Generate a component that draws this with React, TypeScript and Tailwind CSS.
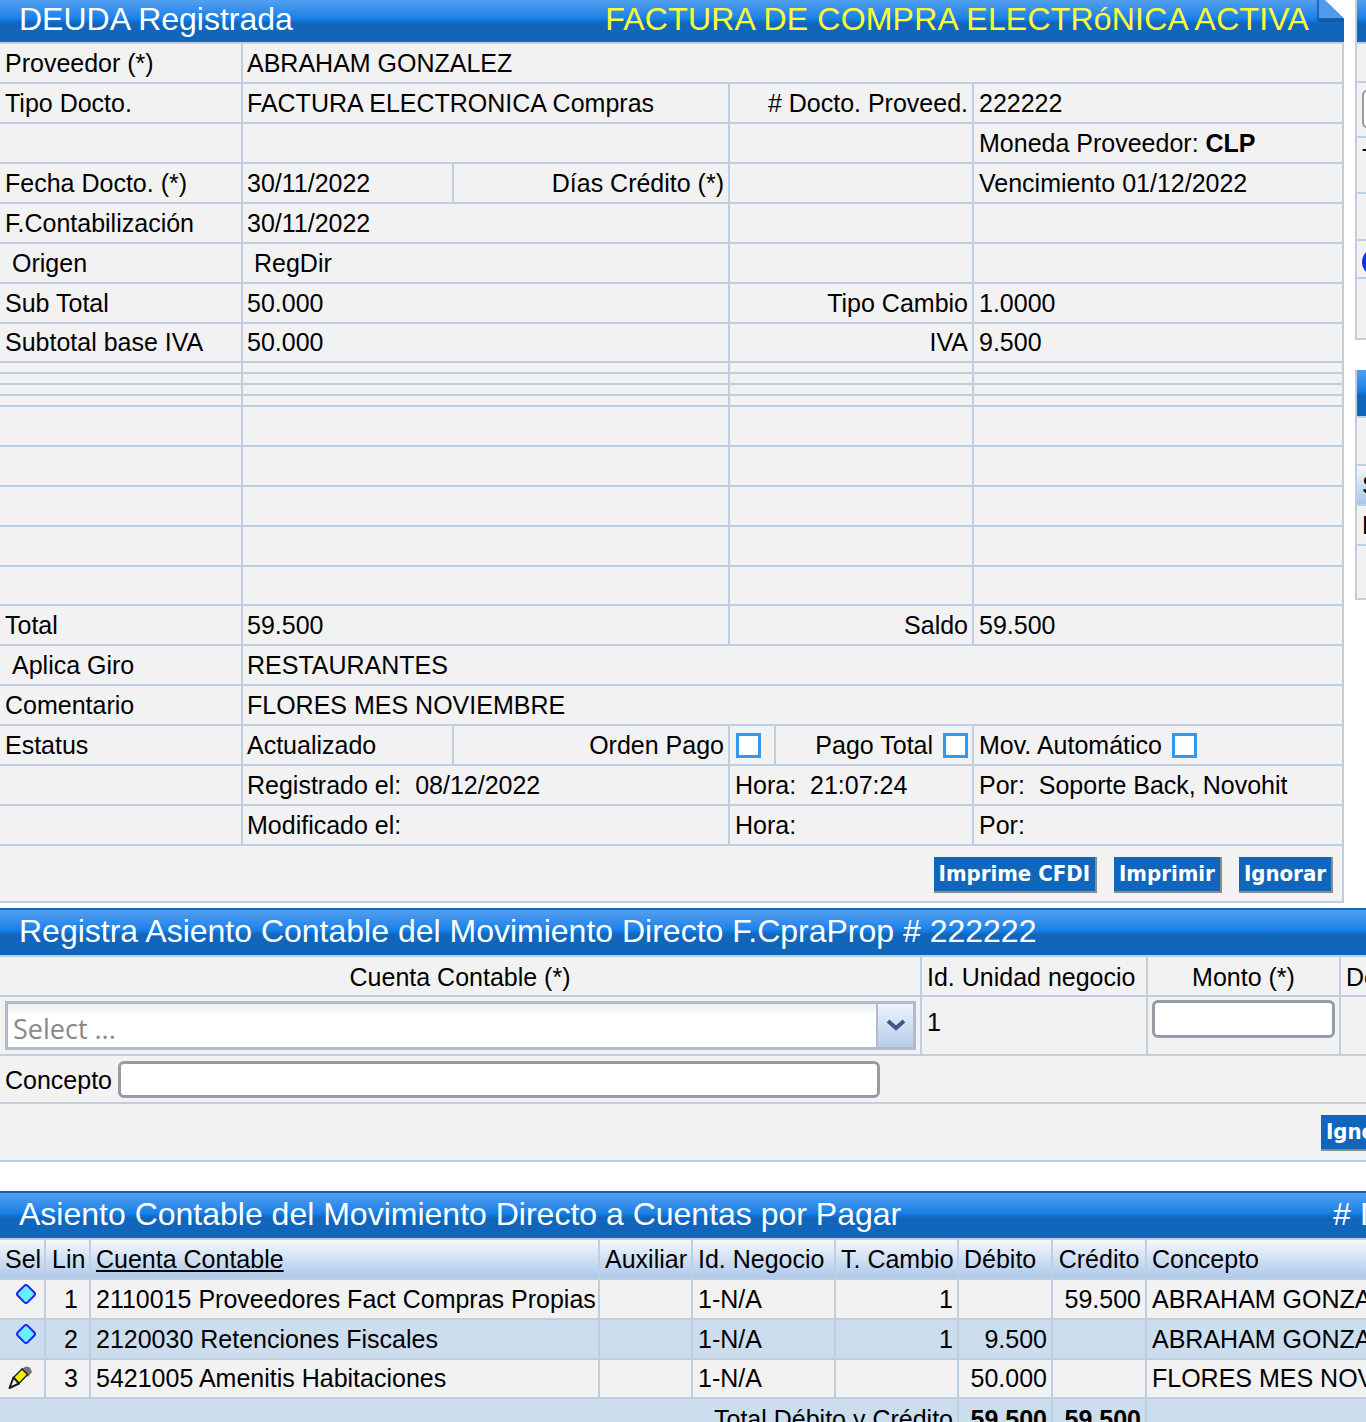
import React from 'react';

const line = 'border-[#c0cfe0]';
const td = `border-b-2 ${line} align-middle whitespace-nowrap overflow-hidden`;
const tl = `${td} border-l-2`;

function Bar({ children, className = '' }: { children: React.ReactNode; className?: string }) {
  return (
    <div className={`h-[44px] border-b-2 ${line} pb-[4px] bg-gradient-to-b from-[#529ff0] via-[#1580e8] via-45% to-[#1166bc] to-55% flex items-center text-[32px] text-white ${className}`}>
      {children}
    </div>
  );
}

function Check({ className = '' }: { className?: string }) {
  return <span className={`inline-block w-[25px] h-[25px] -mt-[4px] bg-white border-[3px] border-[#2f9bf0] align-middle ${className}`} />;
}

function Btn({ children }: { children: React.ReactNode }) {
  return (
    <button className="h-[36px] px-[5px] bg-[#1166bc] border-r-2 border-b-2 border-[#8c8c8c] text-white font-bold text-[22px] font-['DejaVu_Sans_Condensed','DejaVu_Sans',sans-serif] [font-stretch:condensed] whitespace-nowrap">
      {children}
    </button>
  );
}

function Diamond() {
  return (
    <svg width="20" height="20" viewBox="0 0 20 20" className="block ml-[16px] -mt-[11px]">
      <rect x="3" y="3" width="14" height="14" rx="2.5" transform="rotate(45 10 10)" fill="#66f0ff" stroke="#2222ee" strokeWidth="2" />
    </svg>
  );
}

function Pencil() {
  return (
    <svg width="24" height="24" viewBox="0 0 24 24" className="block ml-[8px]">
      <path d="M13 3 L18 0.5 L22 1.5 L24 6 L20 11 Z" fill="#757575" />
      <path d="M5.5 11.5 L14 3 L19.5 8.5 L11 17.5 Z" fill="#f8ee00" stroke="#1c1c1c" strokeWidth="1.4" />
      <path d="M5.5 11.5 L1.5 22 L11 17.5 Z" fill="#f6f6f6" stroke="#1c1c1c" strokeWidth="2" strokeLinejoin="round" />
    </svg>
  );
}

type Row = {
  a?: React.ReactNode; b?: React.ReactNode; c?: React.ReactNode; d?: React.ReactNode;
  h?: string;
};

const topRows: Row[] = [
  { a: 'Tipo Docto.', b: 'FACTURA ELECTRONICA Compras', c: '# Docto. Proveed.', d: '222222' },
  { d: <>Moneda Proveedor: <b>CLP</b></> },
];

const midRows: Row[] = [
  { a: 'F.Contabilización', b: '30/11/2022' },
  { a: <span className="pl-[7px]">Origen</span>, b: <span className="pl-[7px]">RegDir</span> },
  { a: 'Sub Total', b: '50.000', c: 'Tipo Cambio', d: '1.0000' },
  { a: 'Subtotal base IVA', b: '50.000', c: 'IVA', d: '9.500', h: 'h-[39px] [&>td]:pb-[2px]' },
  { h: 'h-[11px]' }, { h: 'h-[11px]' }, { h: 'h-[11px]' }, { h: 'h-[11px]' },
  {}, {}, {}, {},
  { h: 'h-[39px]' },
  { a: 'Total', b: '59.500', c: 'Saldo', d: '59.500' },
];

function Std({ a, b, c, d, h = 'h-[40px]' }: Row) {
  return (
    <tr className={h}>
      <td className={`${td} pl-[5px]`}>{a}</td>
      <td colSpan={2} className={`${tl} pl-[4px]`}>{b}</td>
      <td colSpan={2} className={`${tl} pr-[4px] text-right`}>{c}</td>
      <td className={`${tl} border-r-2 pl-[5px]`}>{d}</td>
    </tr>
  );
}

function Wide({ a, b }: { a: React.ReactNode; b: React.ReactNode }) {
  return (
    <tr className="h-[40px]">
      <td className={`${td} pl-[5px]`}>{a}</td>
      <td colSpan={5} className={`${tl} border-r-2 pl-[4px]`}>{b}</td>
    </tr>
  );
}

function DeudaPanel() {
  return (
    <div className="w-[1344px] shrink-0">
      <Bar className="relative pl-[19px] pr-[35px] justify-between">
        <span>DEUDA Registrada</span>
        <span className="text-[#ffff33] tracking-[0.2px]">FACTURA DE COMPRA ELECTRóNICA ACTIVA</span>
        <svg width="27" height="24" viewBox="0 0 27 24" className="absolute right-0 top-0">
          <path d="M0 0 H8 L27 19 V22 H3 Q0 22 0 19 Z" fill="#0d4f96" opacity="0.65" />
          <path d="M2 0 H8 L26 18 H2 Z" fill="#4f9bee" />
          <path d="M8 0 H27 V18.5 Z" fill="#ffffff" />
        </svg>
      </Bar>
      <table className="w-full table-fixed border-separate border-spacing-0 bg-[#f2f2f2]">
        <colgroup>
          <col className="w-[241px]" /><col className="w-[211px]" /><col className="w-[276px]" />
          <col className="w-[46px]" /><col className="w-[198px]" /><col />
        </colgroup>
        <tbody>
          <Wide a="Proveedor (*)" b="ABRAHAM GONZALEZ" />
          {topRows.map((r, i) => <Std key={i} {...r} />)}
          <tr className="h-[40px]">
            <td className={`${td} pl-[5px]`}>Fecha Docto. (*)</td>
            <td className={`${tl} pl-[4px]`}>30/11/2022</td>
            <td className={`${tl} pr-[4px] text-right`}>Días Crédito (*)</td>
            <td colSpan={2} className={tl}></td>
            <td className={`${tl} border-r-2 pl-[5px]`}>Vencimiento 01/12/2022</td>
          </tr>
          {midRows.map((r, i) => <Std key={i} {...r} />)}
          <Wide a={<span className="pl-[7px]">Aplica Giro</span>} b="RESTAURANTES" />
          <Wide a="Comentario" b="FLORES MES NOVIEMBRE" />
          <tr className="h-[40px]">
            <td className={`${td} pl-[5px]`}>Estatus</td>
            <td className={`${tl} pl-[4px]`}>Actualizado</td>
            <td className={`${tl} pr-[4px] text-right`}>Orden Pago</td>
            <td className={`${tl} pl-[6px]`}><Check /></td>
            <td className={`${tl} pr-[4px] text-right`}>Pago Total <Check className="ml-[3px]" /></td>
            <td className={`${tl} border-r-2 pl-[5px]`}>Mov. Automático <Check className="ml-[3px]" /></td>
          </tr>
          <tr className="h-[40px]">
            <td className={td}></td>
            <td colSpan={2} className={`${tl} pl-[4px] whitespace-pre`}>Registrado el:  08/12/2022</td>
            <td colSpan={2} className={`${tl} pl-[5px] whitespace-pre`}>Hora:  21:07:24</td>
            <td className={`${tl} border-r-2 pl-[5px] whitespace-pre`}>Por:  Soporte Back, Novohit</td>
          </tr>
          <tr className="h-[40px]">
            <td className={td}></td>
            <td colSpan={2} className={`${tl} pl-[4px]`}>Modificado el:</td>
            <td colSpan={2} className={`${tl} pl-[5px]`}>Hora:</td>
            <td className={`${tl} border-r-2 pl-[5px]`}>Por:</td>
          </tr>
          <tr className="h-[57px]">
            <td colSpan={6} className={`${td} border-r-2 pr-[9px]`}>
              <div className="flex justify-end gap-[17px] mt-[2px]">
                <Btn>Imprime CFDI</Btn>
                <Btn>Imprimir</Btn>
                <Btn>Ignorar</Btn>
              </div>
            </td>
          </tr>
        </tbody>
      </table>
    </div>
  );
}

// the two panels that the window cuts off on the right
function SidePanels() {
  const cell = `border-b-2 ${line} px-[5px] overflow-hidden whitespace-nowrap`;
  return (
    <div className="w-[300px] shrink-0 ml-[11px]">
      <div className={`h-[340px] flex flex-col border-l-2 ${line} bg-[#f2f2f2]`}>
        <Bar className="shrink-0">{' '}</Bar>
        <div className={`${cell} h-[39px]`} />
        <div className={`${cell} h-[55px] pt-[7px]`}>
          <div className="w-[200px] h-[38px] border-2 border-[#9a9aa6] rounded-[5px] bg-white" />
        </div>
        <div className={`${cell} h-[56px] pt-[5px]`}>Total</div>
        <div className={`${cell} h-[47px]`} />
        <div className={`${cell} h-[38px] pt-[7px]`}>
          <div className="w-[28px] h-[28px] rounded-full bg-[#1030e8]" />
        </div>
        <div className={`${cell} flex-1`} />
      </div>
      <div className={`h-[230px] mt-[30px] flex flex-col border-l-2 ${line} bg-[#f2f2f2]`}>
        <Bar className="shrink-0 h-[48px]">{' '}</Bar>
        <div className={`${cell} h-[48px]`} />
        <div className={`${cell} h-[40px] bg-gradient-to-b from-[#f5f8fd] to-[#a9c6e8] flex items-center`}>Sel</div>
        <div className={`${cell} h-[40px] flex items-center`}>Documento</div>
        <div className={`${cell} flex-1`} />
      </div>
    </div>
  );
}

function AsientoForm() {
  return (
    <div className="w-[1500px] mt-[5px]">
      <Bar className="h-[49px] border-t-2 border-t-[#1166bc] pl-[19px]">
        Registra Asiento Contable del Movimiento Directo F.CpraProp # 222222
      </Bar>
      <table className="w-full table-fixed border-separate border-spacing-0 bg-[#f2f2f2]">
        <colgroup>
          <col className="w-[920px]" /><col className="w-[226px]" /><col className="w-[193px]" /><col />
        </colgroup>
        <tbody>
          <tr className="h-[40px] [&>td]:pt-[1px]">
            <td className={`${td} text-center`}>Cuenta Contable (*)</td>
            <td className={`${tl} pl-[5px]`}>Id. Unidad negocio</td>
            <td className={`${tl} text-center`}>Monto (*)</td>
            <td className={`${tl} pl-[5px]`}>Descripción</td>
          </tr>
          <tr className="h-[59px]">
            <td className={`${td} px-[5px]`}>
              <div className="flex h-[49px] -mt-[1px] w-[911px] border-[3px] border-[#b5b9cc] bg-gradient-to-b from-[#e9eeee] to-white to-30%">
                <span className="flex-1 pl-[5px] text-[27px] leading-[49px] text-[#888] font-['Open_Sans',sans-serif]">Select ...</span>
                <span className="w-[37px] border-l-2 border-[#b5b9cc] bg-gradient-to-b from-[#eef3fb] to-[#b6cde8] flex items-center justify-center">
                  <svg width="20" height="14" viewBox="0 0 20 14">
                    <path d="M2 3 L10 10 L18 3" fill="none" stroke="#3d5a88" strokeWidth="4" />
                  </svg>
                </span>
              </div>
            </td>
            <td className={`${tl} pl-[5px] pb-[7px]`}>1</td>
            <td className={`${tl} px-[4px] align-top pt-[3px]`}>
              <div className="h-[38px] border-[3px] border-[#9a9aa6] rounded-[6px] bg-white" />
            </td>
            <td className={tl}></td>
          </tr>
          <tr className="h-[48px]">
            <td colSpan={4} className={`${td} pl-[5px]`}>
              <div className="flex items-center gap-[6px] mt-[1px]">
                <span>Concepto</span>
                <div className="w-[762px] h-[37px] border-[3px] border-[#9a9aa6] rounded-[6px] bg-white" />
              </div>
            </td>
          </tr>
          <tr className="h-[58px]">
            <td colSpan={4} className={`${td} pl-[1321px]`}>
              <div className="mt-[2px]"><Btn>Ignorar</Btn></div>
            </td>
          </tr>
        </tbody>
      </table>
    </div>
  );
}

const lines = [
  { sel: <Diamond />, lin: 1, cuenta: '2110015 Proveedores Fact Compras Propias', tc: '1', deb: '', cre: '59.500', con: 'ABRAHAM GONZALEZ', bg: 'bg-[#f2f2f2]', h: 'h-[40px]' },
  { sel: <Diamond />, lin: 2, cuenta: '2120030 Retenciones Fiscales', tc: '1', deb: '9.500', cre: '', con: 'ABRAHAM GONZALEZ', bg: 'bg-[#ccdded]', h: 'h-[40px]' },
  { sel: <Pencil />, lin: 3, cuenta: '5421005 Amenitis Habitaciones', tc: '', deb: '50.000', cre: '', con: 'FLORES MES NOVIEMBRE', bg: 'bg-[#f2f2f2]', h: 'h-[39px] [&>td]:pb-[2px]' },
];

function AsientoTable() {
  const th = `${tl} pl-[5px] text-left font-normal`;
  return (
    <div className="w-[1500px] mt-[29px]">
      <Bar className="h-[49px] border-t-2 border-t-[#1166bc] pl-[19px]">
        <span className="w-[1314px]">Asiento Contable del Movimiento Directo a Cuentas por Pagar</span>
        <span># I</span>
      </Bar>
      <table className="w-full table-fixed border-separate border-spacing-0">
        <colgroup>
          <col className="w-[44px]" /><col className="w-[45px]" /><col className="w-[509px]" /><col className="w-[93px]" />
          <col className="w-[143px]" /><col className="w-[123px]" /><col className="w-[94px]" /><col className="w-[94px]" /><col />
        </colgroup>
        <thead>
          <tr className="h-[40px] bg-gradient-to-b from-[#f5f8fd] to-[#a9c6e8]">
            <th className={`${td} pl-[5px] text-left font-normal`}>Sel</th>
            <th className={`${tl} pl-[6px] text-left font-normal`}>Lin</th>
            <th className={th}><u>Cuenta Contable</u></th>
            <th className={th}>Auxiliar</th>
            <th className={th}>Id. Negocio</th>
            <th className={th}>T. Cambio</th>
            <th className={th}>Débito</th>
            <th className={`${tl} text-center font-normal`}>Crédito</th>
            <th className={th}>Concepto</th>
          </tr>
        </thead>
        <tbody>
          {lines.map((l) => (
            <tr key={l.lin} className={`${l.h} ${l.bg}`}>
              <td className={td}>{l.sel}</td>
              <td className={`${tl} pr-[11px] text-right`}>{l.lin}</td>
              <td className={`${tl} pl-[5px]`}>{l.cuenta}</td>
              <td className={tl}></td>
              <td className={`${tl} pl-[5px]`}>1-N/A</td>
              <td className={`${tl} pr-[4px] text-right`}>{l.tc}</td>
              <td className={`${tl} pr-[4px] text-right`}>{l.deb}</td>
              <td className={`${tl} pr-[4px] text-right`}>{l.cre}</td>
              <td className={`${tl} pl-[5px]`}>{l.con}</td>
            </tr>
          ))}
          <tr className="h-[40px] bg-[#ccdded]">
            <td colSpan={6} className="pr-[4px] text-right align-middle">Total Débito y Crédito</td>
            <td className={`border-l-2 ${line} pr-[4px] text-right font-bold align-middle`}>59.500</td>
            <td className={`border-l-2 ${line} pr-[4px] text-right font-bold align-middle`}>59.500</td>
            <td className={`border-l-2 ${line}`}></td>
          </tr>
        </tbody>
      </table>
    </div>
  );
}

export default function App() {
  return (
    <div className="w-[1366px] h-[1422px] overflow-hidden bg-white text-[25px] leading-[30px] text-black font-['Liberation_Sans',Arial,sans-serif]">
      <div className="flex">
        <DeudaPanel />
        <SidePanels />
      </div>
      <AsientoForm />
      <AsientoTable />
    </div>
  );
}
